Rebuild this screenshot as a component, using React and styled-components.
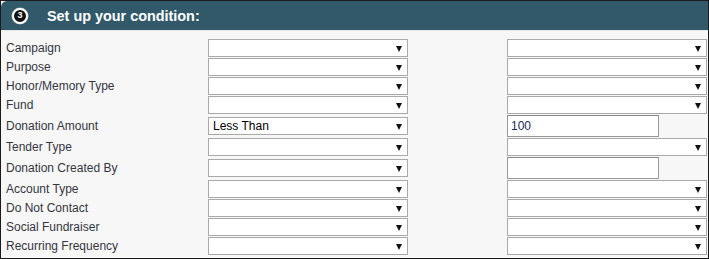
import React from "react";
import styled, { createGlobalStyle } from "styled-components";

const Global = createGlobalStyle`
  html, body { margin: 0; padding: 0; background: #fff; }
  body { font-family: "Liberation Sans", Arial, sans-serif; }
`;

const Panel = styled.div`
  width: 709px;
  height: 259px;
  box-sizing: border-box;
  border: 1px solid #1a1a1a;
  background: #f7f7f7;
  overflow: hidden;
`;

const Header = styled.div`
  height: 29px;
  background: #31596a;
  border-top-left-radius: 6px;
  border-bottom: 1px solid #e8e8e8;
  display: flex;
  align-items: center;
  padding-left: 11px;
  gap: 19px;
`;

const StepBadge = styled.div`
  width: 12px;
  height: 12px;
  border-radius: 50%;
  background: #111;
  border: 2px solid #fff;
  box-shadow: 0 0 0 0.5px rgba(255, 255, 255, 0.5);
  color: #fff;
  font: bold 9px "Liberation Sans", Arial, sans-serif;
  display: flex;
  align-items: center;
  justify-content: center;
  line-height: 1;
`;

const Title = styled.div`
  color: #fff;
  font: bold 14.4px "Liberation Sans", Arial, sans-serif;
`;

const Body = styled.div`
  padding: 8px 0 0 5px;
  display: grid;
  grid-template-columns: 202px 299px 1fr;
  row-gap: 1px;
  align-items: center;
`;

const Label = styled.div`
  font-size: 12px;
  color: #35353f;
  height: 100%;
  display: flex;
  align-items: center;
`;

const Cell = styled.div`
  display: flex;
  align-items: center;
  min-height: ${(p) => (p.$tall ? 22 : 18)}px;
`;

const SelectBox = styled.div`
  width: 200px;
  height: 18px;
  box-sizing: border-box;
  border: 1px solid #a9a9a9;
  background: #fff;
  position: relative;
  display: flex;
  align-items: center;
  padding-left: 4px;
  font-size: 12px;
  color: #000;
`;

const Arrow = styled.span`
  position: absolute;
  right: 5px;
  top: 6px;
  width: 0;
  height: 0;
  border-left: 3.5px solid transparent;
  border-right: 3.5px solid transparent;
  border-top: 6px solid #111;
`;

const TextBox = styled.div`
  width: 152px;
  height: 22px;
  box-sizing: border-box;
  border: 1px solid #999;
  border-top-color: #888;
  background: #fff;
  display: flex;
  align-items: center;
  padding-left: 3px;
  font-size: 12px;
  color: #1a2a5a;
`;

const Select = ({ value }) => (
  <SelectBox>
    {value}
    <Arrow />
  </SelectBox>
);

const rows = [
  { label: "Campaign" },
  { label: "Purpose" },
  { label: "Honor/Memory Type" },
  { label: "Fund" },
  { label: "Donation Amount", op: "Less Than", input: "100" },
  { label: "Tender Type" },
  { label: "Donation Created By", input: "" },
  { label: "Account Type" },
  { label: "Do Not Contact" },
  { label: "Social Fundraiser" },
  { label: "Recurring Frequency" },
];

export default function App() {
  return (
    <>
      <Global />
      <Panel>
        <Header>
          <StepBadge>3</StepBadge>
          <Title>Set up your condition:</Title>
        </Header>
        <Body>
          {rows.map((r) => {
            const tall = r.input !== undefined;
            return (
              <React.Fragment key={r.label}>
                <Label>{r.label}</Label>
                <Cell $tall={tall}>
                  <Select value={r.op || ""} />
                </Cell>
                <Cell $tall={tall}>
                  {tall ? <TextBox>{r.input}</TextBox> : <Select value="" />}
                </Cell>
              </React.Fragment>
            );
          })}
        </Body>
      </Panel>
    </>
  );
}
